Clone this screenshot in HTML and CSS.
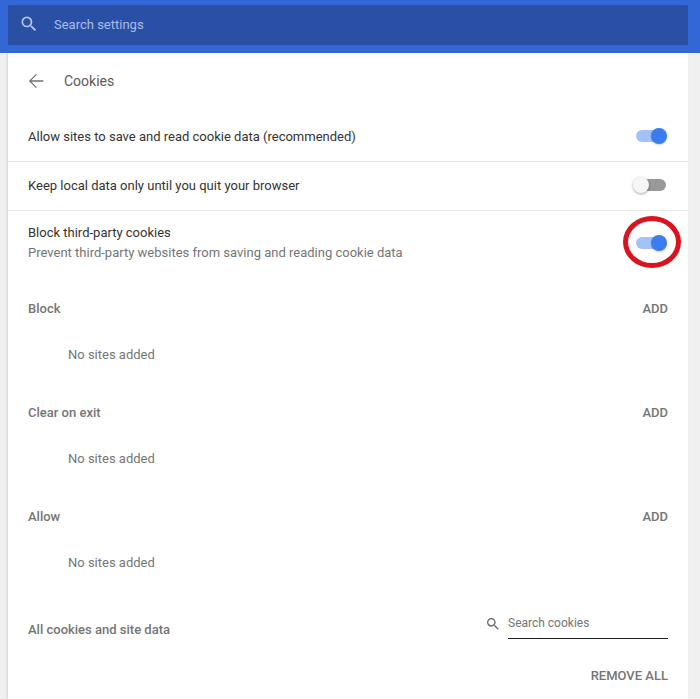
FILE: index.html
```html
<!DOCTYPE html>
<html lang="en">
<head>
    <meta charset="UTF-8">
    <meta name="viewport" content="width=device-width, initial-scale=1.0">
    <title>Cookies</title>
    <link rel="stylesheet" href="styles.css">
</head>
<body>

    <div class="topbar">
        <div class="search-box">
            <svg class="search-icon" width="20" height="20" viewBox="0 0 24 24"><path d="M15.5 14h-.79l-.28-.27A6.47 6.47 0 0 0 16 9.5 6.5 6.5 0 1 0 9.5 16c1.61 0 3.09-.59 4.23-1.57l.27.28v.79l5 4.99L20.49 19l-4.99-5zm-6 0C7.01 14 5 11.99 5 9.5S7.01 5 9.5 5 14 7.01 14 9.5 11.99 14 9.5 14z"/></svg>
            <span class="search-text">Search settings</span>
        </div>
    </div>

    <div class="card">
        <div class="title-row">
            <svg class="back-icon" width="22" height="22" viewBox="0 0 24 24"><path d="M20 11.2H6.9l6-6L12 4.3 4.3 12l7.7 7.7.9-.9-6-6H20v-1.6z"/></svg>
            <span class="title">Cookies</span>
        </div>

        <div class="row row-first">
            <span class="row-label">Allow sites to save and read cookie data (recommended)</span>
            <div class="toggle on"><div class="knob"></div></div>
        </div>
        <div class="row row-mid">
            <span class="row-label">Keep local data only until you quit your browser</span>
            <div class="toggle"><div class="knob"></div></div>
        </div>
        <div class="row row-tall">
            <div class="row-text">
                <div class="row-label">Block third-party cookies</div>
                <div class="row-sub">Prevent third-party websites from saving and reading cookie data</div>
            </div>
            <div class="toggle on"><div class="knob"></div></div>
            <div class="red-circle"></div>
        </div>

        <div class="section section-first">
            <span class="section-name">Block</span>
            <span class="action">ADD</span>
        </div>
        <div class="empty">No sites added</div>

        <div class="section">
            <span class="section-name">Clear on exit</span>
            <span class="action">ADD</span>
        </div>
        <div class="empty">No sites added</div>

        <div class="section">
            <span class="section-name">Allow</span>
            <span class="action">ADD</span>
        </div>
        <div class="empty">No sites added</div>

        <div class="all-cookies">
            <span class="section-name">All cookies and site data</span>
            <div class="cookie-search">
                <svg width="16" height="16" viewBox="0 0 24 24"><path d="M15.5 14h-.79l-.28-.27A6.47 6.47 0 0 0 16 9.5 6.5 6.5 0 1 0 9.5 16c1.61 0 3.09-.59 4.23-1.57l.27.28v.79l5 4.99L20.49 19l-4.99-5zm-6 0C7.01 14 5 11.99 5 9.5S7.01 5 9.5 5 14 7.01 14 9.5 11.99 14 9.5 14z"/></svg>
                <span class="cookie-input">Search cookies</span>
            </div>
        </div>
        <div class="remove-row">
            <span class="action">REMOVE ALL</span>
        </div>
    </div>

</body>
</html>
```

FILE: styles.css
```css
html, body {
    height: 100%;
    overflow: hidden;
}
body {
    margin: 0;
    padding: 0;
    font-family: Roboto, "Liberation Sans", sans-serif;
    font-size: 13px;
    background-color: #f0f0f0;
}
.topbar {
    height: 53px;
    box-sizing: border-box;
    padding: 5px 12px 8px 8px;
    background-color: #3367d6;
}
.search-box {
    height: 40px;
    box-sizing: border-box;
    display: flex;
    align-items: center;
    padding: 0 0 2px 11px;
    background-color: #2a50a5;
    border-radius: 1px;
}
.search-icon {
    fill: #b7c8ee;
}
.search-text {
    margin-left: 15px;
    color: #a9bdea;
    font-size: 13px;
}
.card {
    width: 680px;
    margin-left: 8px;
    height: 646px;
    background-color: #fff;
    box-shadow: -1px 0 2px rgba(0, 0, 0, 0.12);
}
.title-row {
    height: 57px;
    box-sizing: border-box;
    display: flex;
    align-items: center;
    padding: 0 17px 2px;
}
.back-icon {
    fill: #707070;
}
.title {
    margin-left: 17px;
    color: #5a5a5a;
    font-size: 14px;
}
.row {
    position: relative;
    height: 49px;
    display: flex;
    align-items: center;
    justify-content: space-between;
    padding: 0 20px;
    border-top: 1px solid #e8e8e8;
    box-sizing: border-box;
}
.row-first {
    height: 51px;
    border-top: none;
}
.row-first .row-label {
    margin-top: 2px;
}
.row-mid .toggle {
    margin-bottom: 2px;
}
.row-tall {
    height: 62px;
}
.row-tall .toggle {
    margin-top: 2px;
}
.row-text {
    margin-top: 2px;
}
.row-label {
    color: #333;
    line-height: 20px;
}
.row-sub {
    color: #757575;
    line-height: 20px;
}
.toggle {
    position: relative;
    width: 30px;
    height: 12px;
    margin-right: 2px;
    border-radius: 6px;
    background-color: #999;
}
.toggle.on {
    background-color: #a3c2f7;
}
.knob {
    position: absolute;
    left: -3px;
    top: -2px;
    width: 16px;
    height: 16px;
    border-radius: 50%;
    background-color: #f6f6f6;
    box-shadow: 0 1px 3px rgba(0, 0, 0, 0.35);
}
.toggle.on .knob {
    left: auto;
    right: -1px;
    background-color: #3b7cee;
    box-shadow: 0 1px 2px rgba(0, 0, 0, 0.2);
}
.red-circle {
    position: absolute;
    left: 615px;
    top: 5px;
    width: 48px;
    height: 42px;
    border: 5px solid #d9141f;
    border-radius: 50%;
}
.section {
    height: 20px;
    margin-top: 37px;
    display: flex;
    align-items: center;
    justify-content: space-between;
    padding: 0 20px;
}
.section-first {
    margin-top: 26px;
}
.section-name {
    color: #757575;
    font-weight: 500;
}
.action {
    color: #757575;
    font-weight: 500;
}
.empty {
    height: 20px;
    margin-top: 27px;
    padding-left: 60px;
    line-height: 20px;
    color: #757575;
}
.all-cookies {
    height: 35px;
    margin-top: 31px;
    display: flex;
    align-items: flex-end;
    justify-content: space-between;
    padding: 0 20px;
}
.all-cookies .section-name {
    margin-bottom: 2px;
}
.cookie-search {
    display: flex;
    align-items: flex-start;
}
.cookie-search svg {
    fill: #6a6a6a;
    margin-top: 12px;
    margin-right: 7px;
}
.cookie-input {
    width: 160px;
    height: 34px;
    line-height: 38px;
    font-size: 12px;
    color: #757575;
    border-bottom: 1px solid #222;
}
.remove-row {
    display: flex;
    justify-content: flex-end;
    padding: 0 20px;
    margin-top: 27px;
    line-height: 20px;
}
```
